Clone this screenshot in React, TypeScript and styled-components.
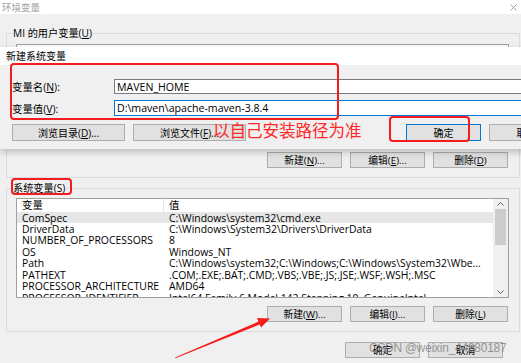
import React from "react"
import styled, { createGlobalStyle } from "styled-components"

const GlobalStyle = createGlobalStyle`
	html, body {
		margin: 0;
		padding: 0;
	}
	body {
		background: #f0f0f0;
		font-family: "Open Sans", "Noto Sans CJK SC", sans-serif;
		color: #000;
	}
	* {
		box-sizing: border-box;
	}
`

const Screen = styled.div`
	position: relative;
	width: 521px;
	height: 363px;
	overflow: hidden;
	background: #f0f0f0;
`

const TitleBar = styled.div`
	height: 14px;
	background: #fff;
	display: flex;
	align-items: center;
	justify-content: space-between;
	padding: 0 4px 0 2px;
	font-size: 9.5px;
	color: #a0a0a0;
`

const Body = styled.div`
	display: flex;
	flex-direction: column;
	padding: 12px 1px 0 6px;
`

const Group = styled.fieldset<{ $top?: number }>`
	margin: ${(p) => p.$top ?? 0}px 0 0;
	padding: 0 10px 9px 9px;
	border: 1px solid #dcdcdc;
	min-width: 0;
`

const Legend = styled.legend`
	margin-left: -4px;
	padding: 0 1px;
	font-size: 10.2px;
	line-height: 14px;
`

const U = styled.u`
	text-underline-offset: 1px;
`

const ListBox = styled.div<{ $top: number }>`
	margin-top: ${(p) => p.$top}px;
	height: 100px;
	border: 1px solid #a0a0a0;
	background: #fff;
	display: flex;
	overflow: hidden;
`

const Table = styled.div`
	flex: 1;
	min-width: 0;
	display: flex;
	flex-direction: column;
	font-size: 10.4px;
`

const HeadRow = styled.div`
	display: grid;
	grid-template-columns: 146px 1fr;
	height: 12.5px;
	line-height: 12.5px;
	flex-shrink: 0;
`

const HeadCell = styled.div`
	padding-left: 5px;
	& + & {
		border-left: 1px solid #e5e5e5;
	}
`

const Row = styled.div<{ $selected?: boolean }>`
	display: grid;
	grid-template-columns: 146px 1fr;
	height: 11.45px;
	line-height: 12px;
	flex-shrink: 0;
	white-space: nowrap;
	background: ${(p) => (p.$selected ? "#e6e6e6" : "transparent")};
`

const Cell = styled.div`
	padding-left: 5px;
`

const ValueCell = styled(Cell)`
	padding-left: 6px;
`

const ScrollBar = styled.div`
	width: 15px;
	flex-shrink: 0;
	background: #f0f0f0;
	display: flex;
	flex-direction: column;
	align-items: center;
`

const ScrollArrow = styled.div`
	height: 10px;
	display: flex;
	align-items: center;
	justify-content: center;
`

const Thumb = styled.div`
	width: 11px;
	height: 36px;
	background: #cdcdcd;
`

const ScrollTrack = styled.div`
	flex: 1;
	width: 100%;
	display: flex;
	justify-content: center;
`

const ButtonRow = styled.div<{ $top: number; $right?: number }>`
	display: flex;
	justify-content: flex-end;
	gap: 8px;
	margin-top: ${(p) => p.$top}px;
	padding-right: ${(p) => p.$right ?? 1}px;
`

const Button = styled.div<{ $w?: number; $h?: number; $primary?: boolean; $size?: number }>`
	width: ${(p) => p.$w ?? 75}px;
	height: ${(p) => p.$h ?? 16}px;
	flex-shrink: 0;
	display: flex;
	align-items: center;
	justify-content: center;
	background: #e1e1e1;
	border: 1px solid ${(p) => (p.$primary ? "#0078d7" : "#adadad")};
	font-size: ${(p) => p.$size ?? 9.8}px;
	white-space: nowrap;
`

const Dialog = styled.div`
	position: absolute;
	left: 0;
	top: 47px;
	width: 570px;
	background: #f0f0f0;
	box-shadow: 0 3px 7px rgba(0, 0, 0, 0.22);
`

const DialogTitle = styled.div`
	height: 18px;
	background: #fff;
	padding-left: 6px;
	font-size: 10px;
	line-height: 18px;
`

const DialogBody = styled.div`
	padding: 14px 0 8px 12px;
`

const FieldGrid = styled.div`
	display: grid;
	grid-template-columns: 102px 1fr;
	row-gap: 6px;
	align-items: center;
`

const FieldLabel = styled.div`
	font-size: 10.4px;
`

const TextBox = styled.div<{ $focused?: boolean }>`
	height: ${(p) => (p.$focused ? 16 : 15)}px;
	border: 1px solid ${(p) => (p.$focused ? "#0078d7" : "#7a7a7a")};
	background: #fff;
	padding-left: 2px;
	display: flex;
	align-items: center;
	font-size: 10.6px;
`

const DialogButtons = styled.div`
	display: flex;
	gap: 8px;
	margin-top: 8px;
`

const Spacer = styled.div`
	width: 144px;
	flex-shrink: 0;
`

const Mark = styled.div<{ $x: number; $y: number; $w: number; $h: number }>`
	position: absolute;
	left: ${(p) => p.$x}px;
	top: ${(p) => p.$y}px;
	width: ${(p) => p.$w}px;
	height: ${(p) => p.$h}px;
	border: 2px solid #f41c1c;
	border-radius: 4px;
`

const Note = styled.div`
	position: absolute;
	left: 213px;
	top: 119px;
	font-family: "Noto Sans CJK SC", sans-serif;
	font-size: 16.5px;
	line-height: 22px;
	color: #ff2626;
	white-space: nowrap;
`

const Arrow = styled.svg`
	position: absolute;
	left: 0;
	top: 0;
	pointer-events: none;
`

const Watermark = styled.div`
	position: absolute;
	left: 369px;
	top: 341px;
	font-family: "Liberation Sans", sans-serif;
	font-size: 11.9px;
	line-height: 14px;
	color: rgba(120, 120, 120, 0.75);
	letter-spacing: -0.2px;
	white-space: nowrap;
`

const systemVars = [
	["ComSpec", "C:\\Windows\\system32\\cmd.exe"],
	["DriverData", "C:\\Windows\\System32\\Drivers\\DriverData"],
	["NUMBER_OF_PROCESSORS", "8"],
	["OS", "Windows_NT"],
	["Path", "C:\\Windows\\system32;C:\\Windows;C:\\Windows\\System32\\Wbe..."],
	["PATHEXT", ".COM;.EXE;.BAT;.CMD;.VBS;.VBE;.JS;.JSE;.WSF;.WSH;.MSC"],
	["PROCESSOR_ARCHITECTURE", "AMD64"],
	["PROCESSOR_IDENTIFIER", "Intel64 Family 6 Model 142 Stepping 10, GenuineIntel"],
]

const Chevron = ({ up }: { up?: boolean }) => (
	<svg width="7" height="4" viewBox="0 0 7 4">
		<polyline
			points={up ? "0.5,3.5 3.5,0.5 6.5,3.5" : "0.5,0.5 3.5,3.5 6.5,0.5"}
			fill="none"
			stroke="#606060"
			strokeWidth="1"
		/>
	</svg>
)

const App = () => {
	return (
		<Screen>
			<GlobalStyle />
			<TitleBar>
				<span>环境变量</span>
				<svg width="7" height="7" viewBox="0 0 7 7">
					<path d="M0.5 0.5 L6.5 6.5 M6.5 0.5 L0.5 6.5" stroke="#8a8a8a" strokeWidth="0.8" />
				</svg>
			</TitleBar>
			<Body>
				<Group>
					<Legend>
						MI 的用户变量(<U>U</U>)
					</Legend>
					<ListBox $top={4} />
					<ButtonRow $top={8}>
						<Button>
							新建(<U>N</U>)...
						</Button>
						<Button>
							编辑(<U>E</U>)...
						</Button>
						<Button>
							删除(<U>D</U>)
						</Button>
					</ButtonRow>
				</Group>
				<Group $top={3}>
					<Legend>
						系统变量(<U>S</U>)
					</Legend>
					<ListBox $top={3}>
						<Table>
							<HeadRow>
								<HeadCell>变量</HeadCell>
								<HeadCell>值</HeadCell>
							</HeadRow>
							{systemVars.map(([name, value], i) => (
								<Row key={name} $selected={i === 0}>
									<Cell>{name}</Cell>
									<ValueCell>{value}</ValueCell>
								</Row>
							))}
						</Table>
						<ScrollBar>
							<ScrollArrow>
								<Chevron up />
							</ScrollArrow>
							<ScrollTrack>
								<Thumb />
							</ScrollTrack>
							<ScrollArrow>
								<Chevron />
							</ScrollArrow>
						</ScrollBar>
					</ListBox>
					<ButtonRow $top={8}>
						<Button>
							新建(<U>W</U>)...
						</Button>
						<Button>
							编辑(<U>I</U>)...
						</Button>
						<Button>
							删除(<U>L</U>)
						</Button>
					</ButtonRow>
				</Group>
				<ButtonRow $top={10} $right={17}>
					<Button $w={75}>确定</Button>
					<Button $w={75}>取消</Button>
				</ButtonRow>
			</Body>

			<Dialog>
				<DialogTitle>新建系统变量</DialogTitle>
				<DialogBody>
					<FieldGrid>
						<FieldLabel>
							变量名(<U>N</U>):
						</FieldLabel>
						<TextBox>MAVEN_HOME</TextBox>
						<FieldLabel>
							变量值(<U>V</U>):
						</FieldLabel>
						<TextBox $focused>D:\maven\apache-maven-3.8.4</TextBox>
					</FieldGrid>
					<DialogButtons>
						<Button $w={113} $h={17} $size={10}>
							浏览目录(<U>D</U>)...
						</Button>
						<Button $w={113} $h={17} $size={10}>
							浏览文件(<U>F</U>)...
						</Button>
						<Spacer />
						<Button $w={75} $h={17} $size={10} $primary>
							确定
						</Button>
						<Button $w={75} $h={17} $size={10}>
							取消
						</Button>
					</DialogButtons>
				</DialogBody>
			</Dialog>

			<Mark $x={10} $y={63} $w={329} $h={57} />
			<Mark $x={389} $y={116} $w={81} $h={26} />
			<Mark $x={11} $y={178} $w={61} $h={17} />
			<Note>以自己安装路径为准</Note>
			<Arrow width="521" height="363" viewBox="0 0 521 363">
				<polygon
					points="175,357.5 258.4,321.6 257,318 270,318.5 261,327.5 259.7,324.6 175.4,358.2"
					fill="#f41c1c"
				/>
			</Arrow>
			<Watermark>CSDN @weixin_44980187</Watermark>
		</Screen>
	)
}

export default App
